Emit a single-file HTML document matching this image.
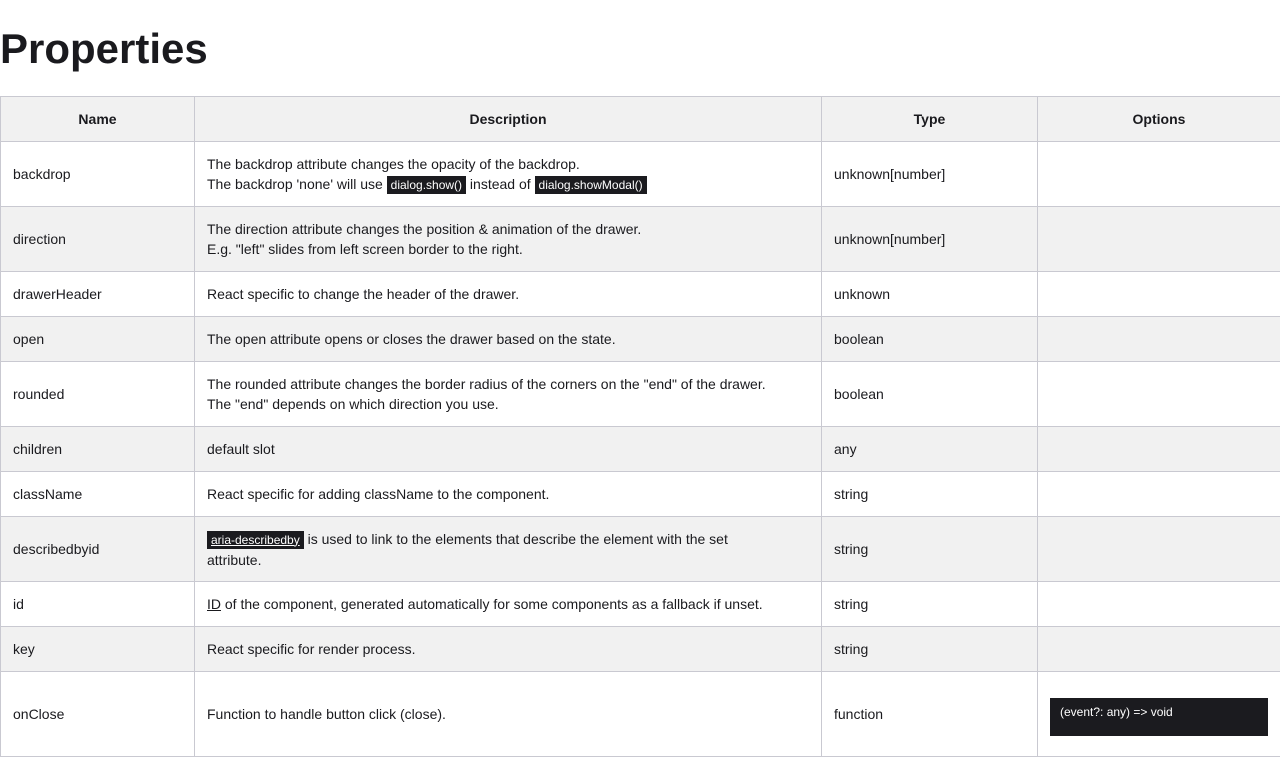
<!DOCTYPE html>
<html><head><meta charset="utf-8"><style>
body{margin:0;background:#fff;font-family:"Liberation Sans",sans-serif;color:#1a1a1e;overflow:hidden;width:1280px;height:720px}
h1{margin:0;position:absolute;left:0;top:24px;font-size:42px;font-weight:bold;letter-spacing:0;line-height:50px}
table{position:absolute;top:96px;left:0;border-collapse:collapse;table-layout:fixed;width:1280px;font-size:14px}
td,th{border:1px solid #c9c9d1;padding:0 12px;vertical-align:middle;line-height:20px}
th{height:44px;background:#f1f1f1;font-weight:bold;font-size:14px}
tr.g td{background:#f1f1f1}
tr.s td{height:44px}
tr.t td{height:64px}
code{background:#1b1b1f;color:#fff;font-family:"Liberation Sans",sans-serif;font-size:12px;padding:2px 4px}
.box{background:#1b1b1f;color:#fff;font-size:12px;padding:4px 10px;height:30px;margin-top:6px}
</style></head><body>
<h1>Properties</h1>
<table>
<colgroup><col style="width:194px"><col style="width:627px"><col style="width:216px"><col style="width:243px"></colgroup>
<tr><th>Name</th><th>Description</th><th>Type</th><th>Options</th></tr>
<tr class="t"><td>backdrop</td><td>The backdrop attribute changes the opacity of the backdrop.<br>The backdrop 'none' will use <code>dialog.show()</code> instead of <code>dialog.showModal()</code></td><td>unknown[number]</td><td></td></tr>
<tr class="t g"><td>direction</td><td>The direction attribute changes the position &amp; animation of the drawer.<br>E.g. "left" slides from left screen border to the right.</td><td>unknown[number]</td><td></td></tr>
<tr class="s"><td>drawerHeader</td><td>React specific to change the header of the drawer.</td><td>unknown</td><td></td></tr>
<tr class="s g"><td>open</td><td>The open attribute opens or closes the drawer based on the state.</td><td>boolean</td><td></td></tr>
<tr class="t"><td>rounded</td><td>The rounded attribute changes the border radius of the corners on the "end" of the drawer.<br>The "end" depends on which direction you use.</td><td>boolean</td><td></td></tr>
<tr class="s g"><td>children</td><td>default slot</td><td>any</td><td></td></tr>
<tr class="s"><td>className</td><td>React specific for adding className to the component.</td><td>string</td><td></td></tr>
<tr class="t g"><td>describedbyid</td><td><code style="text-decoration:underline">aria-describedby</code> is used to link to the elements that describe the element with the set<br>attribute.</td><td>string</td><td></td></tr>
<tr class="s"><td>id</td><td><u>ID</u> of the component, generated automatically for some components as a fallback if unset.</td><td>string</td><td></td></tr>
<tr class="s g"><td>key</td><td>React specific for render process.</td><td>string</td><td></td></tr>
<tr><td style="height:84px">onClose</td><td>Function to handle button click (close).</td><td>function</td><td><div class="box">(event?: any) =&gt; void</div></td></tr>
</table>
</body></html>
